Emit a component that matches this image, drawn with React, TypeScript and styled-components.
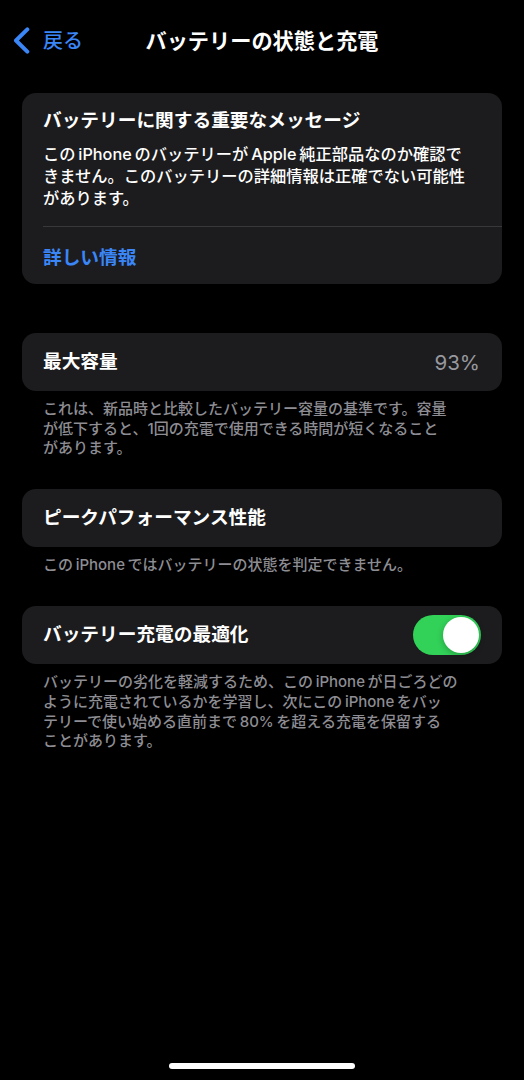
import React from "react";
import styled, { createGlobalStyle } from "styled-components";

const GlobalStyle = createGlobalStyle`
  html, body {
    margin: 0;
    padding: 0;
    background: #000;
  }
  body {
    font-family: "Inter", "Noto Sans CJK JP", sans-serif;
    color: #fff;
    -webkit-font-smoothing: antialiased;
  }
  * { box-sizing: border-box; }
`;

const Page = styled.div`
  width: 524px;
  min-height: 1080px;
  background: #000;
  display: flex;
  flex-direction: column;
`;

const NavBar = styled.header`
  height: 81px;
  display: grid;
  grid-template-columns: 1fr auto 1fr;
  align-items: center;
`;

const BackButton = styled.button`
  justify-self: start;
  display: flex;
  align-items: center;
  gap: 13px;
  padding: 0 0 0 13px;
  margin: 0;
  border: none;
  background: none;
  color: #3a86f7;
  font-family: inherit;
  font-size: 20px;
  font-weight: 500;
  line-height: 28px;
  cursor: pointer;
`;

const NavTitle = styled.h1`
  margin: 0;
  font-size: 21.2px;
  font-weight: 700;
  line-height: 28px;
  color: #fff;
  white-space: nowrap;
`;

const Content = styled.main`
  padding: 12px 22px 0;
  display: flex;
  flex-direction: column;
`;

const Section = styled.section<{ $spaceAfter: number }>`
  margin-bottom: ${(p) => p.$spaceAfter}px;
`;

const Card = styled.div`
  background: #1c1c1e;
  border-radius: 14px;
  overflow: hidden;
`;

const MessageBody = styled.div`
  height: 133px;
  padding: 15.5px 21px 0;
`;

const MessageTitle = styled.h2`
  margin: 0;
  font-size: 18.7px;
  font-weight: 700;
  line-height: 24px;
  white-space: nowrap;
`;

const MessageText = styled.p`
  margin: 10.5px 0 0;
  font-size: 16.25px;
  font-weight: 500;
  line-height: 22px;
  white-space: nowrap;
`;

const LinkRow = styled.a`
  display: flex;
  align-items: center;
  height: 58px;
  margin-left: 21px;
  border-top: 1px solid #38383a;
  color: #3a86f7;
  font-size: 18.7px;
  font-weight: 600;
  text-decoration: none;
  cursor: pointer;
`;

const Row = styled.div`
  display: flex;
  align-items: center;
  justify-content: space-between;
  height: 58px;
  padding: 0 21px;
`;

const RowLabel = styled.span`
  font-size: 18.7px;
  font-weight: 600;
  line-height: 24px;
  white-space: nowrap;
`;

const RowValue = styled.span`
  font-size: 20.5px;
  font-weight: 400;
  color: #98989e;
  margin-right: 1px;
`;

const Footnote = styled.p`
  margin: 0;
  padding: 8px 21px 0;
  font-size: 15px;
  font-weight: 500;
  line-height: 19.6px;
  color: #8d8d93;
  white-space: nowrap;
`;

const ToggleTrack = styled.button<{ $on: boolean }>`
  position: relative;
  width: 68px;
  height: 40px;
  border: none;
  border-radius: 20px;
  padding: 0;
  background: ${(p) => (p.$on ? "#32d158" : "#39393d")};
  cursor: pointer;
`;

const ToggleKnob = styled.span<{ $on: boolean }>`
  position: absolute;
  top: 2px;
  left: ${(p) => (p.$on ? "30px" : "2px")};
  width: 36px;
  height: 36px;
  border-radius: 50%;
  background: #fff;
  box-shadow: 0 2px 6px rgba(0, 0, 0, 0.25);
`;

const HomeIndicator = styled.div`
  margin: auto auto 11px;
  width: 186px;
  height: 6px;
  border-radius: 3px;
  background: #fff;
`;

const Chevron = () => (
  <svg width="17" height="27" viewBox="0 0 17 27" fill="none">
    <path
      d="M14.3 2.4 L3 13.5 L14.3 24.6"
      stroke="currentColor"
      strokeWidth="4"
      strokeLinecap="round"
      strokeLinejoin="round"
    />
  </svg>
);

const Toggle = ({ on }: { on: boolean }) => (
  <ToggleTrack $on={on} aria-pressed={on}>
    <ToggleKnob $on={on} />
  </ToggleTrack>
);

const T = "\u2009";

export default function App() {
  return (
    <>
      <GlobalStyle />
      <Page>
        <NavBar>
          <BackButton>
            <Chevron />
            戻る
          </BackButton>
          <NavTitle>バッテリーの状態と充電</NavTitle>
          <div />
        </NavBar>
        <Content>
          <Section $spaceAfter={49}>
            <Card>
              <MessageBody>
                <MessageTitle>バッテリーに関する重要なメッセージ</MessageTitle>
                <MessageText>
                  この{T}iPhone{T}のバッテリーが{T}Apple{T}純正部品なのか確認で
                  <br />
                  きません。このバッテリーの詳細情報は正確でない可能性
                  <br />
                  があります。
                </MessageText>
              </MessageBody>
              <LinkRow>詳しい情報</LinkRow>
            </Card>
          </Section>

          <Section $spaceAfter={31.5}>
            <Card>
              <Row>
                <RowLabel>最大容量</RowLabel>
                <RowValue>93%</RowValue>
              </Row>
            </Card>
            <Footnote>
              これは、新品時と比較したバッテリー容量の基準です。容量
              <br />
              が低下すると、1回の充電で使用できる時間が短くなること
              <br />
              があります。
            </Footnote>
          </Section>

          <Section $spaceAfter={31.5}>
            <Card>
              <Row>
                <RowLabel>ピークパフォーマンス性能</RowLabel>
              </Row>
            </Card>
            <Footnote>
              この{T}iPhone{T}ではバッテリーの状態を判定できません。
            </Footnote>
          </Section>

          <Section $spaceAfter={0}>
            <Card>
              <Row>
                <RowLabel>バッテリー充電の最適化</RowLabel>
                <Toggle on />
              </Row>
            </Card>
            <Footnote>
              バッテリーの劣化を軽減するため、この{T}iPhone{T}が日ごろどの
              <br />
              ように充電されているかを学習し、次にこの{T}iPhone{T}をバッ
              <br />
              テリーで使い始める直前まで{T}80%{T}を超える充電を保留する
              <br />
              ことがあります。
            </Footnote>
          </Section>
        </Content>
        <HomeIndicator />
      </Page>
    </>
  );
}
